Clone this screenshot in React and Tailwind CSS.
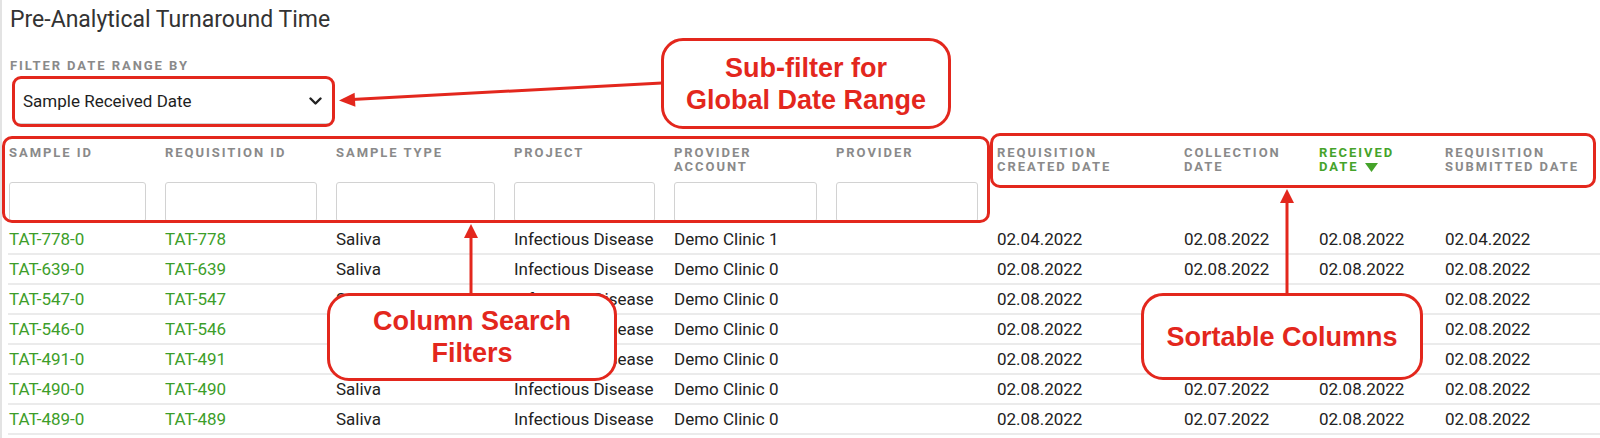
import React from 'react';

const COLS = 'grid grid-cols-[156px_171px_178px_160px_162px_161px_187px_135px_126px_1fr]';

const headers = [
  { lines: ['Sample ID'], filter: true },
  { lines: ['Requisition ID'], filter: true },
  { lines: ['Sample Type'], filter: true },
  { lines: ['Project'], filter: true },
  { lines: ['Provider', 'Account'], filter: true },
  { lines: ['Provider'], filter: true },
  { lines: ['Requisition', 'Created Date'] },
  { lines: ['Collection', 'Date'] },
  { lines: ['Received', 'Date'], sorted: true },
  { lines: ['Requisition', 'Submitted Date'] },
];

const rows = [
  ['TAT-778-0', 'TAT-778', 'Saliva', 'Infectious Disease', 'Demo Clinic 1', '', '02.04.2022', '02.08.2022', '02.08.2022', '02.04.2022'],
  ['TAT-639-0', 'TAT-639', 'Saliva', 'Infectious Disease', 'Demo Clinic 0', '', '02.08.2022', '02.08.2022', '02.08.2022', '02.08.2022'],
  ['TAT-547-0', 'TAT-547', 'Saliva', 'Infectious Disease', 'Demo Clinic 0', '', '02.08.2022', '02.08.2022', '02.08.2022', '02.08.2022'],
  ['TAT-546-0', 'TAT-546', 'Saliva', 'Infectious Disease', 'Demo Clinic 0', '', '02.08.2022', '02.08.2022', '02.08.2022', '02.08.2022'],
  ['TAT-491-0', 'TAT-491', 'Saliva', 'Infectious Disease', 'Demo Clinic 0', '', '02.08.2022', '02.07.2022', '02.08.2022', '02.08.2022'],
  ['TAT-490-0', 'TAT-490', 'Saliva', 'Infectious Disease', 'Demo Clinic 0', '', '02.08.2022', '02.07.2022', '02.08.2022', '02.08.2022'],
  ['TAT-489-0', 'TAT-489', 'Saliva', 'Infectious Disease', 'Demo Clinic 0', '', '02.08.2022', '02.07.2022', '02.08.2022', '02.08.2022'],
];

const HeaderCell = ({ lines, filter, sorted }) => (
  <div className={filter ? 'pr-[19px]' : ''}>
    <div
      className={`h-[28px] text-[13px] leading-[14px] font-bold uppercase tracking-[0.15em] ${
        sorted ? 'text-[#45a32a]' : 'text-[#8a8a8a]'
      }`}
    >
      {lines.map((line, i) => (
        <div key={i} className="whitespace-nowrap flex items-center">
          {line}
          {sorted && i === lines.length - 1 && (
            <svg width="13" height="9" viewBox="0 0 13 9" className="ml-[7px]">
              <path d="M0 0h13L6.5 9z" fill="#45a32a" />
            </svg>
          )}
        </div>
      ))}
    </div>
    {filter && (
      <div className="mt-[8px] h-[40px] rounded-[3px] border border-[#d2d2d2] bg-white" />
    )}
  </div>
);

// annotation callout bubble
const Callout = ({ className, children }) => (
  <div
    className={`absolute flex items-center justify-center rounded-[22px] border-[3px] border-[#e3271d] bg-white text-center text-[27px] leading-[32px] font-bold text-[#e3271d] ${className}`}
    style={{ fontFamily: '"Liberation Sans", Arial, sans-serif' }}
  >
    <div>{children}</div>
  </div>
);

export default function App() {
  return (
    <div
      className="relative w-[1600px] h-[438px] overflow-hidden bg-white border-l-2 border-[#e3e3e3] text-[#222]"
      style={{ fontFamily: 'Roboto, "Liberation Sans", sans-serif' }}
    >
      <h1 className="pl-[8px] pt-[5px] text-[23px] leading-[29px] text-[#333] font-normal">
        Pre-Analytical Turnaround Time
      </h1>

      <div className="pl-[8px] mt-[25px] text-[13px] leading-[14px] font-bold uppercase tracking-[0.15em] text-[#8a8a8a]">
        Filter Date Range By
      </div>
      <div className="ml-[12px] mt-[5px] w-[319px] h-[46px] flex items-center justify-between pl-[8px] pr-[10px] rounded-[4px] border border-[#d2d2d2] bg-white">
        <span className="text-[17px] leading-[24px] text-[#1e1e1e]">Sample Received Date</span>
        <svg width="13" height="8" viewBox="0 0 13 8">
          <path d="M1.5 1.5l5 5 5-5" fill="none" stroke="#222" strokeWidth="2.4" strokeLinecap="round" strokeLinejoin="round" />
        </svg>
      </div>

      {/* table header with column filters */}
      <div className={`ml-[6px] pl-[1px] mt-[22px] ${COLS}`}>
        {headers.map((h, i) => (
          <HeaderCell key={i} {...h} />
        ))}
      </div>

      {/* table body */}
      <div className="ml-[6px] mt-[3px]">
        {rows.map((row, r) => (
          <div key={r} className={`pl-[1px] h-[30px] items-center border-b-2 border-[#ebebeb] text-[17px] leading-[20px] ${COLS}`}>
            {row.map((cell, c) => (
              <div key={c} className={`whitespace-nowrap ${c < 2 ? 'text-[#3d9e2a]' : 'text-[#222]'}`}>
                {cell}
              </div>
            ))}
          </div>
        ))}
      </div>

      {/* annotation layer */}
      <div className="absolute left-[10px] top-[76px] w-[323px] h-[51px] rounded-[9px] border-[3px] border-[#e3271d]" />
      <div className="absolute left-0 top-[136px] w-[988px] h-[87px] rounded-[10px] border-[3px] border-[#e3271d]" />
      <div className="absolute left-[988px] top-[133px] w-[606px] h-[55px] rounded-[10px] border-[3px] border-[#e3271d]" />

      <svg className="absolute left-[-2px] top-0 pointer-events-none" width="1600" height="438" viewBox="0 0 1600 438">
        <g stroke="#e3271d" strokeWidth="3" fill="none">
          <line x1="662" y1="83" x2="352" y2="99.5" />
          <line x1="471" y1="294" x2="471" y2="236" />
          <line x1="1287" y1="294" x2="1287" y2="201" />
        </g>
        <g fill="#e3271d">
          <path d="M339 100.5L355.4 106.8L354.6 92.8z" />
          <path d="M471 224L464 238L478 238z" />
          <path d="M1287 189L1280 203L1294 203z" />
        </g>
      </svg>

      <Callout className="left-[659px] top-[38px] w-[290px] h-[91px]">
        Sub-filter for
        <br />
        Global Date Range
      </Callout>
      <Callout className="left-[325px] top-[293px] w-[290px] h-[88px]">
        Column Search
        <br />
        Filters
      </Callout>
      <Callout className="left-[1139px] top-[293px] w-[282px] h-[87px]">Sortable Columns</Callout>
    </div>
  );
}
